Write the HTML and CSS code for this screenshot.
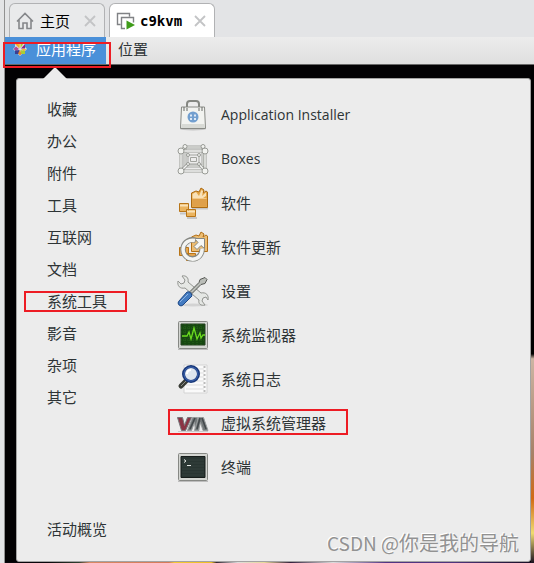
FILE: index.html
```
<!DOCTYPE html>
<html lang="zh-CN">
<head>
    <meta charset="UTF-8">
    <meta name="viewport" content="width=device-width, initial-scale=1.0">
    <title>c9kvm</title>
    <link rel="stylesheet" href="styles.css">
</head>
<body>
    <nav class="tabs">
        <div class="tab">
            <svg class="tab-icon" width="18" height="18" viewBox="0 0 18 18" fill="none" stroke="#85878a" stroke-width="1.6">
                <path d="M1 9.5 9 1.5l8 8M3 8v8.5h4V11h4v5.5h4V8"/>
            </svg>
            <a href="#home">主页</a>
            <button class="close" aria-label="关闭主页">
                <svg width="12" height="12" viewBox="0 0 12 12" stroke="#c3c4c6" stroke-width="1.8"><path d="M1 1l10 10M11 1 1 11"/></svg>
            </button>
        </div>
        <div class="tab active">
            <svg class="tab-icon" width="20" height="18" viewBox="0 0 20 18">
                <path d="M4.500 12.500H1.500V1.500h12v3M9 16.500H5.500v-11h12v5" fill="none" stroke="#808285" stroke-width="1.400"/>
                <path d="M10.500 8.500v9l8.500-4.500z" fill="#3f9c1a"/>
            </svg>
            <a href="#c9kvm">c9kvm</a>
            <button class="close" aria-label="关闭 c9kvm">
                <svg width="12" height="12" viewBox="0 0 12 12" stroke="#c3c4c6" stroke-width="1.8"><path d="M1 1l10 10M11 1 1 11"/></svg>
            </button>
        </div>
    </nav>

    <div class="guest">
        <header class="panel">
            <button class="panel-button open marked">
                <svg width="14" height="14" viewBox="0 0 14 14">
                    <path d="M7 0l2 2h3v3l2 2-2 2v3H9l-2 2-2-2H2V9L0 7l2-2V2h3z" fill="#dcdfe8"/>
                    <path d="M2 2h4.500v4.500z" fill="#edac2b"/>
                    <path d="M5 1.500 7 0v6z" fill="#f3c64d"/>
                    <path d="M7.500 6V.500L10 2.500z" fill="#a8ce38"/>
                    <path d="M8 6.500 12 2v4.500z" fill="#932279"/>
                    <path d="M.500 7 3 4.500l3 2.500-3 2z" fill="#b04b99"/>
                    <path d="M8 7h5.500L11 9.500z" fill="#f0b83e"/>
                    <path d="M2 8.500 6.500 8v4H2z" fill="#3c3f91"/>
                    <path d="M7.500 8 12 9v3H8z" fill="#a8ce38"/>
                    <path d="M5 11.500 7 8l1.500 4L7 13.500z" fill="#e9882b"/>
                </svg>
                应用程序
            </button>
            <button class="panel-button">位置</button>
        </header>

        <main class="desktop">
            <div class="menu">
                <ul class="categories">
                    <li><a href="#">收藏</a></li>
                    <li><a href="#">办公</a></li>
                    <li><a href="#">附件</a></li>
                    <li><a href="#">工具</a></li>
                    <li><a href="#">互联网</a></li>
                    <li><a href="#">文档</a></li>
                    <li class="marked"><a href="#">系统工具</a></li>
                    <li><a href="#">影音</a></li>
                    <li><a href="#">杂项</a></li>
                    <li><a href="#">其它</a></li>
                    <li class="overview"><a href="#">活动概览</a></li>
                </ul>

                <ul class="apps">
                    <li>
                        <svg width="32" height="32" viewBox="0 0 32 32">
                            <ellipse cx="16" cy="30" rx="13" ry="1.500" fill="#c4c4c4"/>
                            <path d="M10 9V5q0-3 3-3h6q3 0 3 3v4" fill="none" stroke="#858782" stroke-width="2"/>
                            <path d="M4.500 8h23l1 21.500h-25z" fill="#f2f3f0" stroke="#888a85"/>
                            <path d="M5 25h22.500l.5 4H4z" fill="#d8dad5"/>
                            <path d="M7 8v4M25 8v4M10 9v3M22 9v3" stroke="#696b67"/>
                            <circle cx="16" cy="18" r="5.500" fill="#729fcf"/>
                            <path d="M13 15.500h2v2h-2zM17 15.500h2v2h-2zM13 19h2v2h-2zM17 19h2v2h-2z" fill="#dce8f5"/>
                        </svg>
                        <a href="#">Application Installer</a>
                    </li>
                    <li>
                        <svg width="32" height="32" viewBox="0 0 32 32">
                            <path d="M8 4h18v19H8z" fill="none" stroke="#a2a49f" stroke-width="3"/>
                            <path d="M8 4h18v19H8z" fill="none" stroke="#f4f5f3"/>
                            <path d="M11 12h11v9H11zM13.500 14.500h6v4h-6z" fill="none" stroke="#a2a49f"/>
                            <path d="M4 8h24v20H4zM4 8l4-4M28 8l-2-4M4 28l7-7M28 28l-6-7" fill="none" stroke="#999b96" stroke-width="3"/>
                            <path d="M4 8h24v20H4zM4 8l4-4M28 8l-2-4M4 28l7-7M28 28l-6-7" fill="none" stroke="#f4f5f3" stroke-width="1.400"/>
                            <g fill="#f2f3f0" stroke="#999b96">
                                <circle cx="4" cy="8" r="3"/><circle cx="28" cy="8" r="3"/>
                                <circle cx="4" cy="28" r="3"/><circle cx="28" cy="28" r="3"/>
                                <circle cx="8" cy="3.500" r="2"/><circle cx="26" cy="3.500" r="2"/>
                                <circle cx="11" cy="12" r="1.500"/><circle cx="22" cy="12" r="1.500"/>
                                <circle cx="11" cy="21" r="1.500"/><circle cx="22" cy="21" r="1.500"/>
                            </g>
                        </svg>
                        <a href="#">Boxes</a>
                    </li>
                    <li>
                        <svg width="32" height="32" viewBox="0 0 32 32">
                            <path d="M3 26.500h9M10 31h10M15 21.500h16" stroke="#c6c6c6" stroke-width="2"/>
                            <path d="M14.500 6 19 4l3 1 2-4 3 2-1 3 3-2 1.500 1v15.500h-16z" fill="#e5a647" stroke="#ad6b13"/>
                            <path d="M15.500 7 19 5l3 4 2.500-6L26 4l-1 5 4-3.500V9l-3 2H15.500z" fill="#f8e1b8"/>
                            <path d="M15.500 11h14v8h-14z" fill="#dfa04a"/>
                            <path d="M15.500 11.500h14" stroke="#f3c887"/>
                            <path d="M2.500 16.500h9v8h-9zM9.500 22.500h9v7h-9z" fill="#ebb45f" stroke="#b87518"/>
                            <path d="M3 18.500h8M10 24.500h8" stroke="#fae2b8" stroke-width="2"/>
                        </svg>
                        <a href="#">软件</a>
                    </li>
                    <li>
                        <svg width="32" height="32" viewBox="0 0 32 32">
                            <path d="M14.500 6 19 4l3 1 2-4 3 2-1 3 3-2 1.500 1v15.500h-16z" fill="#edbd72" stroke="#b27018"/>
                            <path d="M2.500 16.500h9v8h-9zM9.500 22.500h9v7h-9z" fill="#e7a54a" stroke="#b87518"/>
                            <path d="M19 9.500a9.500 9.500 0 1 0 6 8" fill="none" stroke="#858782" stroke-width="5.500"/>
                            <path d="M17.500 7.500h10v10l-3.500-3-4 4-3-3 4-4z" fill="#f6f7f5" stroke="#858782"/>
                            <path d="M18 9.500a9.500 9.500 0 1 0 7 8" fill="none" stroke="#f3f4f2" stroke-width="3.500"/>
                        </svg>
                        <a href="#">软件更新</a>
                    </li>
                    <li>
                        <svg width="32" height="32" viewBox="0 0 32 32">
                            <ellipse cx="16" cy="30" rx="15" ry="1.500" fill="#d3d3d3"/>
                            <path d="M5 1l3 4-1 3-3 1-3-3c-1 5 2 8 7 7l14 12c-1 4 2 6 6 5l-3-4 1-3 3-1 2 3c1-5-2-8-7-7L11 7c1-4-2-7-6-6z" fill="#e5e7e4" stroke="#929490"/>
                            <path d="M28 2.500l2 2-2 4-4 1-9 9-2-2 9-9 1-3z" fill="#babdb8" stroke="#555753"/>
                            <path d="M10 17q4-1 5 4L6 30q-2 2-4 0t0-4z" fill="#437bc1" stroke="#204a87"/>
                            <path d="M11 19 3 27" stroke="#8fb5e3"/>
                        </svg>
                        <a href="#">设置</a>
                    </li>
                    <li>
                        <svg width="32" height="32" viewBox="0 0 32 32">
                            <path d="M1 30.500h30" stroke="#bdbdbd"/>
                            <rect x="1.500" y="2.500" width="29" height="27" rx="1" fill="#d4d6d2" stroke="#868884"/>
                            <path d="M4 5h24v21H4z" fill="#164810" stroke="#244020"/>
                            <path d="M8 5v21M12 5v21M16 5v21M20 5v21M24 5v21M4 9h24M4 13h24M4 21h24" stroke="#27611a" stroke-dasharray="1 1"/>
                            <path d="M5 17h5l2-4 2 7 3-11 3 11 3-6 1 5 2-3h2" fill="none" stroke="#6bdb20" stroke-width="1.300"/>
                        </svg>
                        <a href="#">系统监视器</a>
                    </li>
                    <li>
                        <svg width="32" height="32" viewBox="0 0 32 32">
                            <path d="M7 2h23v28H7z" fill="#fafafa" stroke="#d4d4d4"/>
                            <path d="M9 6h18M9 10h18M9 14h18M9 18h18M9 22h18M9 26h18" stroke="#ddd"/>
                            <path d="M27.500 3v27" stroke="#bbb" stroke-width="2" stroke-dasharray="2 2"/>
                            <path d="M9 18l-5 5" stroke="#393c36" stroke-width="5" stroke-linecap="round"/>
                            <path d="M9 18l-5 5" stroke="#8c8f88"/>
                            <circle cx="14" cy="11" r="7.500" fill="#dfe6ef" stroke="#183879" stroke-width="3"/>
                            <circle cx="14" cy="11" r="7" fill="none" stroke="#4269b5"/>
                            <path d="M10 11q0-4 4-4" fill="none" stroke="#fff" stroke-width="2"/>
                        </svg>
                        <a href="#">系统日志</a>
                    </li>
                    <li class="marked">
                        <svg width="32" height="32" viewBox="0 0 32 32">
                            <path d="M1 24.500h30" stroke="#c9c9c9"/>
                            <path d="M.500 10.500h5l2 8 3-8h4l-6 13h-4z" fill="#8b3445" stroke="#77777b"/>
                            <path d="M10.500 23.500l5-13h5l1.500 13h-3.500l-1-8-3 8z" fill="#737879" stroke="#999c9d"/>
                            <path d="M17.500 23.500l4-13h5l4.500 13h-5l-2.500-8-2 8z" fill="#737879" stroke="#999c9d"/>
                            <path d="M13 22l5-11M20 22l3-11M29 22l-4-11" stroke="#43484b" stroke-width="1.500"/>
                        </svg>
                        <a href="#">虚拟系统管理器</a>
                    </li>
                    <li>
                        <svg width="32" height="32" viewBox="0 0 32 32">
                            <path d="M1 30.500h30" stroke="#bdbdbd"/>
                            <rect x="1.500" y="2.500" width="29" height="27" rx="1" fill="#d4d6d2" stroke="#868884"/>
                            <path d="M4 5.500h24v21H4z" fill="#293532" stroke="#171d1b"/>
                            <path d="M5 9h22M5 12h22M5 15h22M5 18h22M5 21h22M5 24h22" stroke="#35413d"/>
                            <path d="M7 8.500l2 1.500-2 1.500M10 14.500h4" fill="none" stroke="#e5e7e5"/>
                        </svg>
                        <a href="#">终端</a>
                    </li>
                </ul>
            </div>
        </main>
    </div>

    <p class="watermark"><span>CSDN @</span>你是我的导航</p>
</body>
</html>
```
FILE: styles.css
```
:root {
    --chrome: #e3e4e6;
    --menu: #ececec;
    --text: #2e3436;
    --mark: #ed1c24;
}

* {
    margin: 0;
    padding: 0;
    box-sizing: border-box;
}

body {
    display: flex;
    flex-direction: column;
    min-height: 100vh;
    padding-left: 4px;
    background: var(--chrome);
    color: var(--text);
    font-family: "Open Sans", "Noto Sans CJK SC", sans-serif;
    font-size: 15px;
    line-height: 20px;
}

a {
    color: inherit;
    text-decoration: none;
}

button {
    border: none;
    background: none;
    color: inherit;
    font: inherit;
    cursor: pointer;
}

ul {
    list-style: none;
}

svg {
    display: block;
    flex-shrink: 0;
}

/* vm tabs */
.tabs {
    display: flex;
    gap: 4px;
    padding: 3px 4px 0;
    border-left: 1px solid #919191;
}

.tab {
    display: flex;
    align-items: center;
    gap: 6px;
    height: 34px;
    padding: 0 8px 0 6px;
    border: 1px solid #b1b2b4;
    border-bottom: none;
    border-radius: 6px 6px 0 0;
    background: #e9eaeb;
    color: #000;
}

.tab.active {
    gap: 4px;
    background: #fff;
    font-family: "DejaVu Sans Mono", monospace;
    font-size: 14px;
    font-weight: bold;
}

.close {
    margin-left: 8px;
}

/* guest screen */
.guest {
    flex: 1;
    display: flex;
    flex-direction: column;
    border-left: 1px solid #919191;
}

.panel {
    display: flex;
    height: 28px;
    border-bottom: 1px solid #686868;
    background: linear-gradient(#ececec, #dfdfdf);
}

.panel-button {
    display: flex;
    align-items: center;
    gap: 9px;
    padding: 0 12px 3px;
}

.panel-button.open {
    padding: 0 10px 3px 8px;
    background: #4a90d9;
    color: #fff;
}

.desktop {
    flex: 1;
    display: flex;
    padding: 13px 3px 1px 11px;
    background:
        linear-gradient(#000 58%, #cdb5a3 59%, #a68168 78%, #d16914 87%, #f0db71 94%, #1a1220) right / 3px 100% no-repeat,
        linear-gradient(90deg, #08050a 8%, #304030 14%, #d88762 16%, #d77b59 31%, #f3c735 32%, #eebe25 39%, #302531 40%, #ddd 44%, #e8d998 49%, #34203d 54%, #ddd 62%, #513383 72%, #4f347d 85%, #160c20) bottom / 100% 1px no-repeat,
        #020103;
}

.menu {
    position: relative;
    flex: 1;
    display: flex;
    padding: 14px 30px;
    border: 1px solid #a3a3a3;
    border-radius: 3px;
    background: var(--menu);
}

/* arrow up to the panel button */
.menu::before {
    content: "";
    position: absolute;
    left: 26px;
    bottom: 100%;
    border: 12px solid transparent;
    border-top: none;
    border-bottom-color: var(--menu);
}

.categories {
    display: flex;
    flex-direction: column;
    width: 130px;
}

.categories li {
    padding: 6px 0;
}

.categories .overview {
    margin-top: auto;
    margin-bottom: 2px;
}

.apps li {
    display: flex;
    align-items: center;
    gap: 12px;
    width: fit-content;
    height: 44px;
}

.apps a:lang(zh) {
    white-space: nowrap;
}

.apps li:nth-child(-n+2) {
    font-size: 14px;
}

/* red outlines */
.marked {
    position: relative;
}

.marked::after {
    content: "";
    position: absolute;
    z-index: 1;
    border: 2px solid var(--mark);
}

.panel-button.marked::after {
    inset: 5px -5px -4px -2px;
}

.categories .marked::after {
    inset: 6px 50px 5px -23px;
}

.apps .marked::after {
    inset: 8px -22px 10px -9px;
}

.watermark {
    position: absolute;
    right: 15px;
    bottom: 6px;
    color: #929292;
    font-family: "Noto Sans CJK SC", sans-serif;
    font-size: 20px;
    line-height: 28px;
    text-shadow: -1px -1px #fff;
}

.watermark span {
    font-size: 19px;
}
```
